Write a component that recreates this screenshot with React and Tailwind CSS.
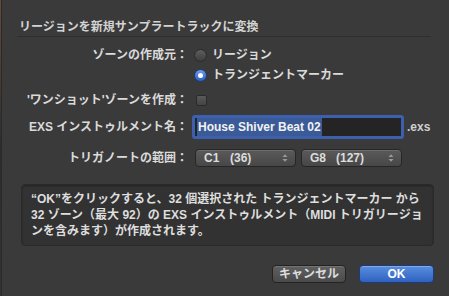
import React from "react";

const font = { fontFamily: '"Liberation Sans", "Noto Sans CJK JP", sans-serif' };

function Stepper() {
    return (
        <svg width="6" height="10" viewBox="0 0 6 10" className="shrink-0">
            <path d="M0.5 4 L3 1.2 L5.5 4 Z" fill="#9a9a9a" />
            <path d="M0.5 6 L3 8.8 L5.5 6 Z" fill="#9a9a9a" />
        </svg>
    );
}

function Select({ note, num, width }) {
    return (
        <div className={`${width} h-[18px] rounded-[4px] border border-[#262626] bg-gradient-to-b from-[#5a5a5a] to-[#474747] flex items-center pl-[8px] pr-[7px] text-[12px] text-[#dcdcdc] font-bold shadow-[inset_0_1px_0_rgba(255,255,255,0.12)]`}>
            <span className="w-[26px]">{note}</span>
            <span className="flex-1">{num}</span>
            <Stepper />
        </div>
    );
}

export default function App() {
    return (
        <div className="w-[449px] h-[296px] bg-[#3a3a3a] flex overflow-hidden select-none" style={font}>
            {/* edge of the window behind */}
            <div className="w-[3px] h-full bg-gradient-to-b from-[#6a4a3a] via-[#2c2c2c] to-[#333] border-r border-[#2a2a2a]" />

            <div className="flex-1 pl-[15px] pr-[15px] pt-[19px] flex flex-col text-[#dadada]">
                {/* Title */}
                <div className="pl-[2px] h-[16px] leading-[16px] text-[12px] font-bold text-[#d4d4d4]">
                    リージョンを新規サンプラートラックに変換
                </div>
                <div className="mt-[1px] h-px w-[414px] bg-[#565656] border-b border-[#2e2e2e]" />

                <div className="grid grid-cols-[171px_1fr] gap-x-[4px] text-[12px] font-bold leading-[16px] mt-[10px]">
                    <div className="text-right">ゾーンの作成元：</div>
                    <div className="flex items-center gap-[5px] pl-[2px]">
                        <span className="w-[13px] h-[13px] rounded-full bg-gradient-to-b from-[#5e5e5e] to-[#3e3e3e] border border-[#2a2a2a]" />
                        <span>リージョン</span>
                    </div>

                    <div className="mt-[4px]" />
                    <div className="mt-[4px] flex items-center gap-[5px] pl-[2px]">
                        <span className="w-[13px] h-[13px] rounded-full bg-gradient-to-b from-[#6f9be6] to-[#2d5fc4] border border-[#1e3a78] flex items-center justify-center">
                            <span className="w-[5px] h-[5px] rounded-full bg-white" />
                        </span>
                        <span>トランジェントマーカー</span>
                    </div>

                    <div className="mt-[9px] text-right">'ワンショット'ゾーンを作成：</div>
                    <div className="mt-[9px] flex items-center pl-[4px]">
                        <span className="w-[11px] h-[11px] rounded-[2px] bg-gradient-to-b from-[#5a5a5a] to-[#444] border border-[#2a2a2a]" />
                    </div>

                    <div className="mt-[7px] h-[24px] flex items-center justify-end">EXS インストゥルメント名：</div>
                    <div className="mt-[7px] flex items-center">
                        <div className="w-[212px] h-[24px] rounded-[3px] border-[3px] border-[#3c5fae] bg-[#242424] flex items-center pl-[2px]">
                            <span className="bg-[#3a5a98] text-[#f2f2f2] h-[18px] leading-[18px] pl-[1px] pr-[1px]">House Shiver Beat 02</span>
                        </div>
                        <span className="ml-[3px] text-[#cfcfcf]">.exs</span>
                    </div>

                    <div className="mt-[10px] h-[18px] flex items-center justify-end">トリガノートの範囲：</div>
                    <div className="mt-[10px] flex items-center gap-[5px] pl-[3px]">
                        <Select note="C1" num="(36)" width="w-[101px]" />
                        <Select note="G8" num="(127)" width="w-[101px]" />
                    </div>
                </div>

                {/* Info box */}
                <div className="mt-[17px] ml-[4px] w-[413px] h-[62px] rounded-[4px] bg-[#323232] border border-[#2a2a2a] shadow-[inset_0_1px_2px_rgba(0,0,0,0.35)] pl-[9px] pt-[6px] text-[12px] leading-[16px] font-bold text-[#dedede] whitespace-nowrap">
                    <div>“OK”をクリックすると、32 個選択された トランジェントマーカー から</div>
                    <div>32 ゾーン（最大 92）の EXS インストゥルメント（MIDI トリガリージョ</div>
                    <div>ンを含みます）が作成されます。</div>
                </div>

                {/* Buttons */}
                <div className="mt-[19px] flex justify-end gap-[13px]">
                    <button className="w-[74px] h-[18px] rounded-[4px] border border-[#232323] bg-gradient-to-b from-[#606060] to-[#4a4a4a] text-[12px] font-bold text-[#dcdcdc] leading-[16px] shadow-[inset_0_1px_0_rgba(255,255,255,0.12)]">
                        キャンセル
                    </button>
                    <button className="w-[75px] h-[18px] rounded-[4px] border border-[#1e3a78] bg-gradient-to-b from-[#5a8ee0] to-[#2f62c0] text-[12px] font-bold text-white leading-[16px] shadow-[inset_0_1px_0_rgba(255,255,255,0.25)]">
                        OK
                    </button>
                </div>
            </div>
        </div>
    );
}
